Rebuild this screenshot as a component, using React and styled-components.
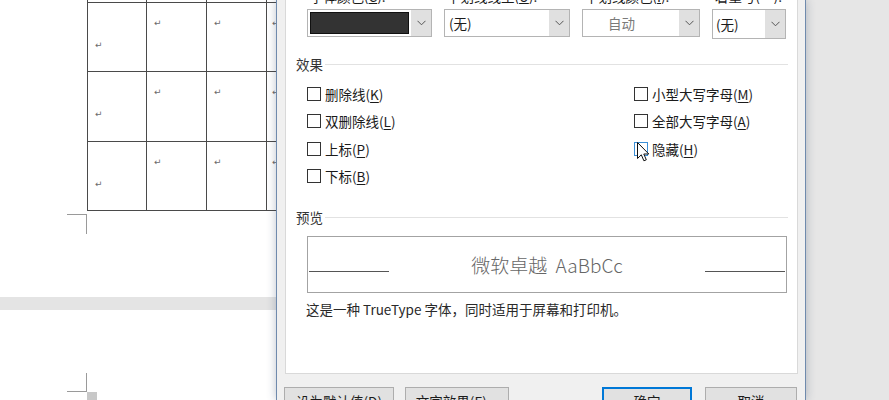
import React from "react";
import styled, { createGlobalStyle } from "styled-components";

const GlobalStyle = createGlobalStyle`
  html, body {
    margin: 0;
    padding: 0;
  }
  body {
    font-family: "Noto Sans CJK SC", "Noto Sans", sans-serif;
    background: #e6e6e6;
    overflow: hidden;
  }
`;

const Screen = styled.div`
  display: flex;
  width: 889px;
  height: 400px;
  overflow: hidden;
  background: #e6e6e6;
`;

/* ---- document behind the dialog ---- */

const DocArea = styled.div`
  width: 276px;
  flex: none;
  display: flex;
  flex-direction: column;
  overflow: hidden;
`;

const Page = styled.div`
  background: #fff;
  height: ${(p) => p.$h}px;
  flex: none;
  display: flex;
  flex-direction: column;
  overflow: hidden;
`;

const PageGap = styled.div`
  height: 13px;
  flex: none;
  background: #e4e4e4;
`;

const Table = styled.div`
  display: grid;
  grid-template-columns: 59px 60px 60px 60px;
  grid-template-rows: 18px 69px 70px 69px;
  margin: -15px 0 0 87px;
  border-left: 1px solid #4a4a4a;
  width: max-content;
`;

const Cell = styled.div`
  box-sizing: border-box;
  overflow: hidden;
  border-right: 1px solid #4a4a4a;
  border-bottom: 1px solid #4a4a4a;
`;

const Mark = styled.span`
  display: block;
  margin: ${(p) => (p.$first ? 37 : 15)}px 0 0 ${(p) => p.$left || 7}px;
  font-family: "DejaVu Sans", sans-serif;
  font-size: 9px;
  line-height: 10px;
  color: #6a6a6a;
`;

const CropMark = styled.div`
  box-sizing: border-box;
  width: 20px;
  height: 20px;
  margin: ${(p) => p.$top}px 0 0 67px;
  border-right: 1px solid #9a9a9a;
  border-${(p) => (p.$bottom ? "bottom" : "top")}: 1px solid #9a9a9a;
`;

const Handle = styled.div`
  width: 10px;
  height: 8px;
  margin-left: 87px;
  background: #c8c8c8;
`;

/* ---- font dialog ---- */

const Dialog = styled.div`
  position: relative;
  z-index: 1;
  width: 530px;
  flex: none;
  box-sizing: border-box;
  background: #f0f0f0;
  border-left: 1px solid #6f8aad;
  border-right: 1px solid #6f8aad;
  box-shadow: 0 0 9px rgba(40, 60, 90, 0.3);
  display: flex;
  flex-direction: column;
  font-size: 13.5px;
  color: #1b1b1b;
`;

const Panel = styled.div`
  flex: none;
  box-sizing: border-box;
  width: 513px;
  height: 374px;
  margin-left: 8px;
  padding-left: 10px;
  background: #fff;
  border: 1px solid #d9d9d9;
  border-top: none;
  display: flex;
  flex-direction: column;
`;

const FieldRow = styled.div`
  display: flex;
  align-items: flex-start;
  gap: 12px;
  margin-left: 11px;
`;

const Field = styled.div`
  width: ${(p) => p.$w}px;
  display: flex;
  flex-direction: column;
`;

const ClippedLabel = styled.div`
  height: 4px;
  overflow: hidden;
  padding-left: 3px;
  span {
    display: block;
    margin-top: -13px;
    line-height: 18px;
    white-space: nowrap;
    color: #1b1b1b;
  }
`;

const Select = styled.div`
  box-sizing: border-box;
  height: ${(p) => p.$h || 28}px;
  margin-top: 5px;
  border: 1px solid #b4b4b4;
  background: #fff;
  display: flex;
  align-items: stretch;
`;

const SelectText = styled.div`
  flex: 1;
  display: flex;
  align-items: center;
  padding-left: ${(p) => p.$pad || 4}px;
  color: ${(p) => (p.$muted ? "#7a7a7a" : "#1b1b1b")};
  white-space: nowrap;
`;

const Swatch = styled.div`
  flex: 1;
  margin: 2px;
  background: #333;
  border: 1px solid #111;
`;

const ArrowBox = styled.div`
  width: 20px;
  flex: none;
  background: #e0e0e0;
  display: flex;
  align-items: center;
  justify-content: center;
`;

const SectionHead = styled.div`
  display: flex;
  align-items: center;
  height: 20px;
  margin-top: ${(p) => p.$mt}px;
  margin-right: 9px;
  color: #333;
  span {
    margin-right: 2px;
  }
  &::after {
    content: "";
    flex: 1;
    height: 1px;
    background: #e2e2e2;
  }
`;

const Effects = styled.div`
  display: grid;
  grid-template-columns: 327px auto;
  grid-auto-rows: 27.5px;
  margin: 6px 0 0 11px;
`;

const Check = styled.label`
  display: flex;
  align-items: center;
  gap: 4px;
  grid-column: ${(p) => p.$col};
  white-space: nowrap;
  u {
    text-decoration-thickness: 1px;
    text-underline-offset: 2px;
  }
`;

const Box = styled.span`
  position: relative;
  box-sizing: border-box;
  width: 14px;
  height: 14px;
  background: #fff;
  border: 1px solid ${(p) => (p.$hover ? "#3c8fd6" : "#333")};
`;

const Cursor = styled.svg`
  position: absolute;
  left: 2px;
  top: -1px;
  width: 13px;
  height: 20px;
`;

const Preview = styled.div`
  box-sizing: border-box;
  width: 480px;
  height: 57px;
  margin: 9px 0 0 11px;
  border: 1px solid #a3a3a3;
  display: flex;
  align-items: center;
`;

const PreviewRule = styled.div`
  width: 80px;
  height: 1px;
  margin: 13px 1px 0 1px;
  background: #555;
`;

const PreviewText = styled.div`
  flex: 1;
  text-align: center;
  font-size: 19px;
  font-weight: 300;
  color: #666;
  white-space: pre;
`;

const Note = styled.div`
  margin: 6px 0 0 10px;
  line-height: 20px;
  color: #2a2a2a;
`;

const ButtonRow = styled.div`
  display: flex;
  flex: none;
  margin-top: 13px;
  padding: 0 7px;
`;

const Button = styled.div`
  box-sizing: border-box;
  width: ${(p) => p.$w}px;
  height: 28px;
  margin-left: ${(p) => p.$ml || 0}px;
  background: #e1e1e1;
  border: 1px solid ${(p) => (p.$primary ? "#0078d7" : "#adadad")};
  box-shadow: ${(p) => (p.$primary ? "inset 0 0 0 1px #0078d7" : "none")};
  display: flex;
  align-items: center;
  justify-content: center;
  white-space: nowrap;
`;

const Chevron = () => (
  <svg width="9" height="6" viewBox="0 0 9 6">
    <polyline points="0.5,0.8 4.5,4.8 8.5,0.8" fill="none" stroke="#555" strokeWidth="1" />
  </svg>
);

const rows = [0, 1, 2, 3];
const cols = [0, 1, 2, 3];

const effects = [
  { col: 1, text: "删除线", key: "K" },
  { col: 2, text: "小型大写字母", key: "M" },
  { col: 1, text: "双删除线", key: "L" },
  { col: 2, text: "全部大写字母", key: "A" },
  { col: 1, text: "上标", key: "P" },
  { col: 2, text: "隐藏", key: "H", hover: true },
  { col: 1, text: "下标", key: "B" },
];

const App = () => {
  return (
    <Screen>
      <GlobalStyle />
      <DocArea>
        <Page $h={297}>
          <Table>
            {rows.map((r) =>
              cols.map((c) => (
                <Cell key={`${r}-${c}`}>
                  {r > 0 && (
                    <Mark $first={c === 0} $left={c === 3 ? 5 : 7}>
                      ↵
                    </Mark>
                  )}
                </Cell>
              ))
            )}
          </Table>
          <CropMark $top={3} />
        </Page>
        <PageGap />
        <Page $h={90}>
          <CropMark $top={63} $bottom />
          <Handle />
        </Page>
      </DocArea>

      <Dialog>
        <Panel>
          <FieldRow>
            <Field $w={125}>
              <ClippedLabel>
                <span>字体颜色(<u>C</u>):</span>
              </ClippedLabel>
              <Select>
                <Swatch />
                <ArrowBox>
                  <Chevron />
                </ArrowBox>
              </Select>
            </Field>
            <Field $w={126}>
              <ClippedLabel>
                <span>下划线线型(<u>U</u>):</span>
              </ClippedLabel>
              <Select>
                <SelectText>(无)</SelectText>
                <ArrowBox>
                  <Chevron />
                </ArrowBox>
              </Select>
            </Field>
            <Field $w={118}>
              <ClippedLabel>
                <span>下划线颜色(<u>I</u>):</span>
              </ClippedLabel>
              <Select>
                <SelectText $muted $pad={25}>自动</SelectText>
                <ArrowBox>
                  <Chevron />
                </ArrowBox>
              </Select>
            </Field>
            <Field $w={74}>
              <ClippedLabel>
                <span>着重号(·):</span>
              </ClippedLabel>
              <Select $h={30}>
                <SelectText $pad={3}>(无)</SelectText>
                <ArrowBox>
                  <Chevron />
                </ArrowBox>
              </Select>
            </Field>
          </FieldRow>

          <SectionHead $mt={15}>
            <span>效果</span>
          </SectionHead>
          <Effects>
            {effects.map((e) => (
              <Check key={e.key} $col={e.col}>
                <Box $hover={e.hover}>
                  {e.hover && (
                    <Cursor viewBox="0 0 13 20">
                      <path
                        d="M0.5 0.5 L0.5 16.5 L4.3 12.8 L6.9 18.8 L9.3 17.8 L6.8 12 L11.8 12 Z"
                        fill="#fff"
                        stroke="#111"
                        strokeWidth="1"
                      />
                    </Cursor>
                  )}
                </Box>
                <span>
                  {e.text}(<u>{e.key}</u>)
                </span>
              </Check>
            ))}
          </Effects>

          <SectionHead $mt={17}>
            <span>预览</span>
          </SectionHead>
          <Preview>
            <PreviewRule />
            <PreviewText>{"微软卓越  AaBbCc"}</PreviewText>
            <PreviewRule />
          </Preview>
          <Note>这是一种 TrueType 字体，同时适用于屏幕和打印机。</Note>
        </Panel>

        <ButtonRow>
          <Button $w={110}>设为默认值(<u>D</u>)</Button>
          <Button $w={104} $ml={11}>文字效果(<u>E</u>)...</Button>
          <Button $w={90} $ml={93} $primary>确定</Button>
          <Button $w={92} $ml={13}>取消</Button>
        </ButtonRow>
      </Dialog>
    </Screen>
  );
};

export default App;
